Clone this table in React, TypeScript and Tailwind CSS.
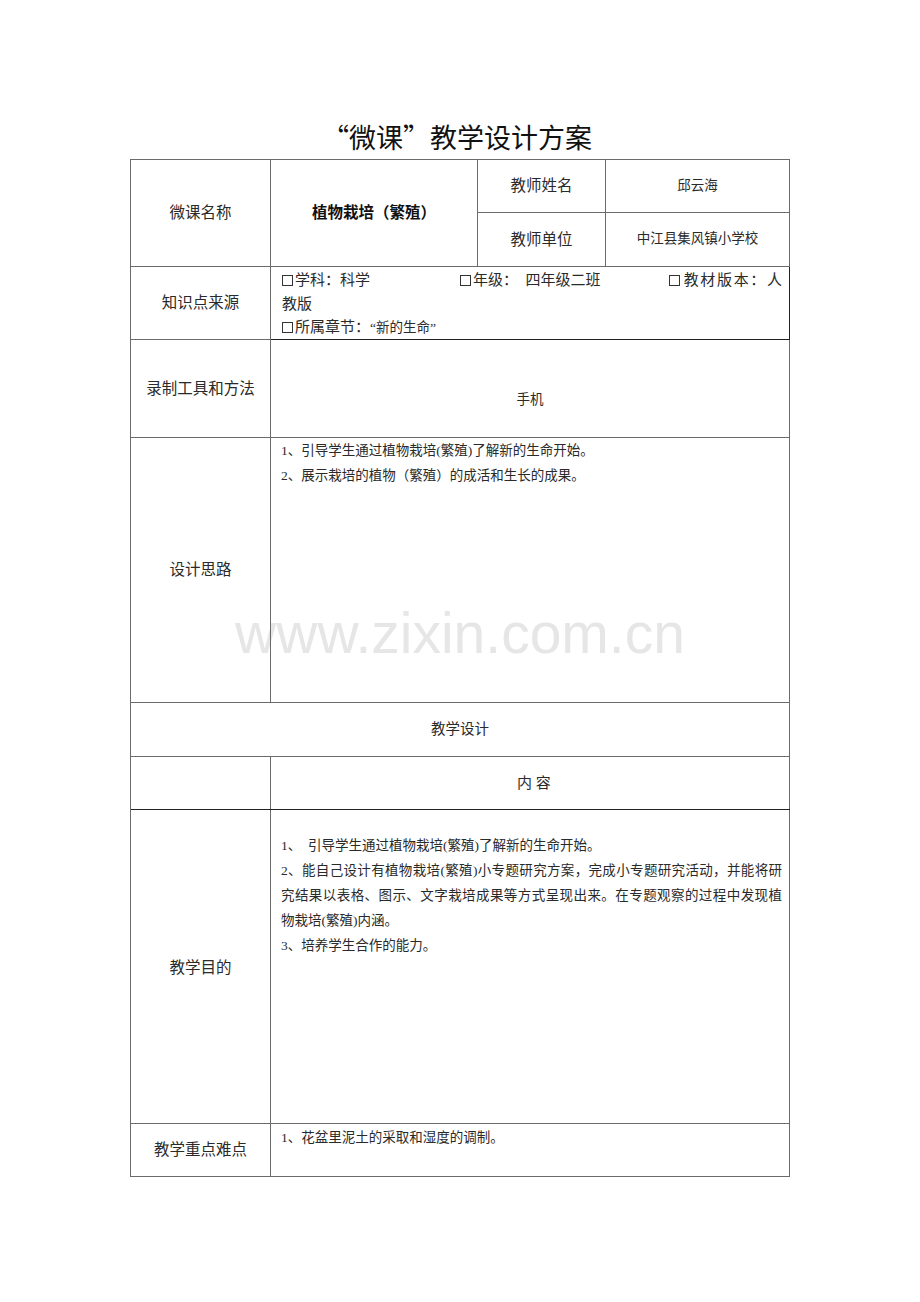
const serif = "font-['Liberation_Serif','Noto_Sans_CJK_SC',serif]"

function Box() {
  return <span className="mr-[2px] inline-block h-[11px] w-[11px] translate-y-[1px] border border-[#333]" />
}

function Label({
  children,
  className = "",
  size = "text-[15.5px]",
}: {
  children?: React.ReactNode
  className?: string
  size?: string
}) {
  return (
    <div className={`flex items-center justify-center border-r border-b border-[#6b6b6b] text-[#2a2a2a] ${size} ${className}`}>
      {children}
    </div>
  )
}

export default function App() {
  return (
    <div className={`relative min-h-[1302px] w-[920px] bg-white ${serif}`}>
      <div className="absolute left-0 right-0 top-[598px] z-0 text-center font-['Liberation_Sans',Arial,sans-serif] text-[57px] leading-[70px] text-[#e6e6e6]">
        www.zixin.com.cn
      </div>

      <div className="relative z-10 ml-[130px] w-[660px] pt-[116px]">
        <h1 className="flex h-[43px] items-center justify-center pr-[6px] font-['Noto_Sans_CJK_SC',sans-serif] text-[27px] font-normal text-[#111]">
          “微课”教学设计方案
        </h1>

        <div className="grid grid-cols-[140px_207px_128px_184px] grid-rows-[53px_54px_73px_98px_265px_54px_53px_314px_53px] border-t border-l border-[#6b6b6b]">
          <Label className="row-span-2">微课名称</Label>
          <Label className="row-span-2 font-bold text-[#111]">植物栽培（繁殖）</Label>
          <Label>教师姓名</Label>
          <Label size="text-[13.5px]">邱云海</Label>
          <Label>教师单位</Label>
          <Label size="text-[13.5px]">中江县集风镇小学校</Label>

          <Label>知识点来源</Label>
          <div className="col-span-3 border-r border-b border-[#222] pt-[2px] pl-[11px] pr-[7px] text-[15px] leading-[23.5px] text-[#2a2a2a]">
            <div className="flex whitespace-nowrap">
              <span className="w-[178px]">
                <Box />学科：科学
              </span>
              <span className="w-[209px]">
                <Box />年级：&nbsp;&nbsp;四年级二班
              </span>
              <span className="flex-1 text-justify [text-align-last:justify]">
                <Box />教材版本：人
              </span>
            </div>
            <div>教版</div>
            <div>
              <Box />所属章节：<span className="text-[13.5px]">“新的生命”</span>
            </div>
          </div>

          <Label>录制工具和方法</Label>
          <div className="col-span-3 flex items-center justify-center border-r border-b border-[#6b6b6b] pt-[24px] text-[13.5px] text-[#2a2a2a]">
            手机
          </div>

          <Label>设计思路</Label>
          <div className="col-span-3 border-r border-b border-[#6b6b6b] pl-[10px] text-[13.5px] leading-[25px] text-[#2a2a2a]">
            <div>1、引导学生通过植物栽培(繁殖)了解新的生命开始。</div>
            <div>2、展示栽培的植物（繁殖）的成活和生长的成果。</div>
          </div>

          <Label className="col-span-4" size="text-[14.5px]">
            教学设计
          </Label>

          <Label />
          <Label className="col-span-3 pl-[8px]" size="text-[15px]">
            内&nbsp;容
          </Label>

          <div className="col-span-4 -mt-px grid grid-cols-[140px_1fr] border-t border-[#222]">
            <Label className="pt-[2px]">教学目的</Label>
            <div className="border-r border-b border-[#6b6b6b] pt-[23px] pl-[10px] pr-[7px] text-[13.5px] leading-[25px] text-[#2a2a2a]">
              <div>1、&nbsp; 引导学生通过植物栽培(繁殖)了解新的生命开始。</div>
              <div className="whitespace-nowrap text-justify [text-align-last:justify]">
                2、能自己设计有植物栽培(繁殖)小专题研究方案，完成小专题研究活动，并能将研
              </div>
              <div className="whitespace-nowrap text-justify [text-align-last:justify]">
                究结果以表格、图示、文字栽培成果等方式呈现出来。在专题观察的过程中发现植
              </div>
              <div>物栽培(繁殖)内涵。</div>
              <div>3、培养学生合作的能力。</div>
            </div>
          </div>

          <Label>教学重点难点</Label>
          <div className="col-span-3 border-r border-b border-[#6b6b6b] pt-px pl-[10px] text-[13.5px] leading-[25px] text-[#2a2a2a]">
            1、花盆里泥土的采取和湿度的调制。
          </div>
        </div>
      </div>
    </div>
  )
}
